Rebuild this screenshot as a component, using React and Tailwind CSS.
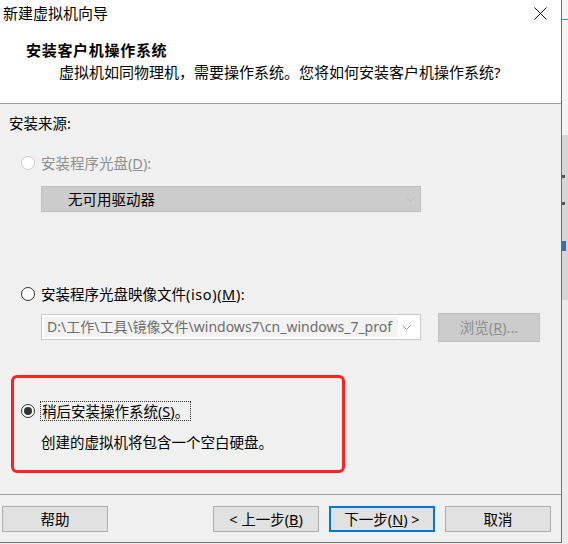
import React from "react";

const FONT = { fontFamily: '"Noto Sans", "Noto Sans CJK SC", sans-serif' };

function Radio({ checked, disabled }) {
  return (
    <span
      className={
        "w-[14px] h-[14px] shrink-0 rounded-full border bg-white flex items-center justify-center " +
        (disabled ? "border-[#c6c6c6]" : "border-[#333333]")
      }
    >
      {checked && <span className="w-[8px] h-[8px] rounded-full bg-[#333333]" />}
    </span>
  );
}

function Chevron({ color = "#b9b9b9" }) {
  return (
    <svg width="9" height="5" viewBox="0 0 9 5" className="shrink-0">
      <polyline points="0.5,0.5 4.5,4.5 8.5,0.5" fill="none" stroke={color} strokeWidth="1" />
    </svg>
  );
}

function Btn({ children, primary }) {
  return (
    <div
      className={
        "h-[26px] w-[106px] flex items-center justify-center bg-[#e1e1e1] text-[14.5px] leading-[20px] text-black " +
        (primary ? "border-2 border-[#0078d7]" : "border border-[#adadad]")
      }
    >
      {children}
    </div>
  );
}

export default function App() {
  return (
    <div className="w-[568px] h-[544px] flex bg-[#f0f0f0] overflow-hidden" style={FONT}>
      {/* dialog */}
      <div className="w-[562px] h-[543px] flex flex-col border-r border-b border-[#6f6f6f] bg-[#f0f0f0]">
        {/* header */}
        <div className="h-[104px] bg-white border-b border-[#a0a0a0] flex flex-col">
          <div className="h-[26px] flex items-center justify-between pl-[3px] pr-[14px]">
            <span className="text-[15px] leading-[20px] text-black">新建虚拟机向导</span>
            <svg width="13" height="13" viewBox="0 0 13 13">
              <line x1="0.5" y1="0.5" x2="12.5" y2="12.5" stroke="#111" strokeWidth="1" />
              <line x1="12.5" y1="0.5" x2="0.5" y2="12.5" stroke="#111" strokeWidth="1" />
            </svg>
          </div>
          <div className="mt-[14px] h-[20px] flex items-center pl-[26px]">
            <span className="text-[15px] leading-[20px] font-bold text-black tracking-[0.7px]">安装客户机操作系统</span>
          </div>
          <div className="mt-[2px] h-[20px] flex items-center pl-[59px]">
            <span className="text-[15px] leading-[20px] text-black">
              虚拟机如同物理机，需要操作系统。您将如何安装客户机操作系统?
            </span>
          </div>
        </div>

        {/* body */}
        <div className="h-[391px] border-b border-[#a0a0a0] flex flex-col text-[14.5px] leading-[20px] text-black">
          <div className="mt-[9px] h-[20px] flex items-center pl-[9px]">安装来源:</div>

          <div className="mt-[20px] h-[20px] flex items-center pl-[21px] gap-[6px]">
            <Radio disabled />
            <span className="text-[#8e8e8e]">
              安装程序光盘(<span className="underline">D</span>):
            </span>
          </div>

          <div className="mt-[13px] ml-[41px] w-[380px] h-[26px] bg-[#cccccc] border border-[#bfbfbf] flex items-center justify-between pl-[26px] pr-[5px]">
            <span>无可用驱动器</span>
            <Chevron color="#bdbdbd" />
          </div>

          <div className="mt-[72px] h-[20px] flex items-center pl-[21px] gap-[6px]">
            <Radio />
            <span>
              安装程序光盘映像文件<span className="tracking-[0.6px]">(iso)(<span className="underline">M</span>):</span>
            </span>
          </div>

          <div className="mt-[9px] h-[28px] flex items-center pl-[41px] gap-[17px]">
            <div className="w-[380px] h-[26px] bg-white border border-[#c9c9c9] flex items-center pl-[2px] pr-[5px]">
              <div className="w-[354px] h-[20px] bg-[#f2f2f2] flex items-center pl-[3px] overflow-hidden whitespace-nowrap text-[14px] text-[#6d6d6d]">
                D:\工作\工具\镜像文件\windows7\cn_windows_7_prof
              </div>
              <div className="flex-1 flex justify-center">
                <Chevron color="#9a9a9a" />
              </div>
            </div>
            <div className="w-[102px] h-[29px] bg-[#cccccc] border border-[#bfbfbf] flex items-center justify-center text-[#8e8e8e]">
              浏览(<span className="underline">R</span>)...
            </div>
          </div>

          {/* highlighted option */}
          <div className="mt-[34px] ml-[11px] w-[334px] h-[98px] border-[3px] border-[#ff2020] rounded-[6px] flex flex-col pl-[7px]">
            <div className="mt-[23px] h-[20px] flex items-center gap-[5px]">
              <Radio checked />
              <span className="h-[20px] px-[1px] border border-dotted border-[#333333] flex items-center">
                稍后安装操作系统(<span className="underline">S</span>)。
              </span>
            </div>
            <div className="mt-[11px] h-[20px] flex items-center pl-[20px]">创建的虚拟机将包含一个空白硬盘。</div>
          </div>
        </div>

        {/* footer */}
        <div className="flex-1 flex items-start pt-[11px] pl-[2px]">
          <Btn>帮助</Btn>
          <div className="ml-[105px]">
            <Btn>
              &lt; 上一步(<span className="underline">B</span>)
            </Btn>
          </div>
          <div className="ml-[10px]">
            <Btn primary>
              下一步(<span className="underline">N</span>) &gt;
            </Btn>
          </div>
          <div className="ml-[10px]">
            <Btn>取消</Btn>
          </div>
        </div>
      </div>

      {/* background window strip */}
      <div className="flex-1 flex flex-col">
        <div className="h-[19px] bg-[#f4f4f4]" />
        <div className="h-[1px] bg-[#3b8fd6]" />
        <div className="h-[115px] bg-[#f4f4f4]" />
        <div className="h-[165px] bg-[#d6d6d6] flex flex-col">
          <div className="mt-[40px] h-[3px] w-[3px] bg-[#555555]" />
          <div className="mt-[24px] h-[3px] w-[3px] bg-[#555555]" />
          <div className="mt-[36px] h-[10px] w-[4px] bg-[#3a6ea8]" />
        </div>
        <div className="flex-1 bg-[#ececec]" />
      </div>
    </div>
  );
}
